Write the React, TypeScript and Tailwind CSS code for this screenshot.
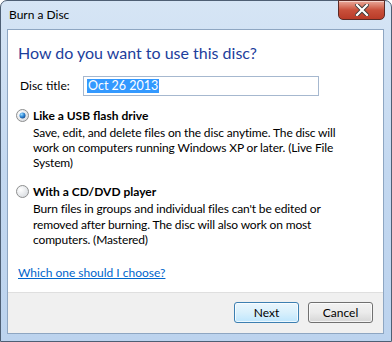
import React from "react";

const font = { fontFamily: 'Lato, "Noto Sans", sans-serif' };

function Radio({ checked }: { checked: boolean }) {
  return (
    <svg width="13" height="13" viewBox="0 0 13 13" className="shrink-0">
      <defs>
        <radialGradient id={checked ? "rg1" : "rg0"} cx="0.35" cy="0.35" r="0.8">
          <stop offset="0" stopColor="#ffffff" />
          <stop offset="1" stopColor="#d4d8dd" />
        </radialGradient>
        <radialGradient id="dot" cx="0.35" cy="0.3" r="0.8">
          <stop offset="0" stopColor="#9fdcff" />
          <stop offset="0.5" stopColor="#2f8ad8" />
          <stop offset="1" stopColor="#123f80" />
        </radialGradient>
      </defs>
      <circle cx="6.5" cy="6.5" r="6" fill={`url(#${checked ? "rg1" : "rg0"})`} stroke="#8e8f8f" strokeWidth="1" />
      {checked && <circle cx="6.5" cy="6.5" r="3" fill="url(#dot)" />}
    </svg>
  );
}

export default function App() {
  return (
    <div className="w-[392px] h-[342px] bg-white overflow-hidden" style={font}>
      <div className="relative w-[392px] h-[342px] rounded-t-[7px] border border-[#4e5f74] bg-gradient-to-b from-[#d6e5f5] via-[#c3d8f0] to-[#bcd3ee] flex flex-col">
        {/* title bar */}
        <div className="h-[28px] flex items-center pl-[8px] pb-[1px] text-[12px] text-black shrink-0">
          Burn a Disc
        </div>
        <div className="absolute top-[-1px] right-[6px] w-[47px] h-[20px] rounded-b-[5px] border border-[#5b2a25] bg-gradient-to-b from-[#e9a99a] via-[#c9503b] to-[#b93b28] flex items-center justify-center shadow-[inset_0_1px_0_rgba(255,255,255,0.5)]">
          <svg width="14" height="12" viewBox="0 0 14 12">
            <path d="M2 1 L12 11 M12 1 L2 11" stroke="#3a3a3a" strokeWidth="4" strokeLinecap="square" />
            <path d="M2 1 L12 11 M12 1 L2 11" stroke="#ffffff" strokeWidth="2.2" strokeLinecap="square" />
          </svg>
        </div>

        {/* client area */}
        <div className="ml-[6px] mr-[7px] h-[305px] border border-[#8ea6c2] bg-white flex flex-col">
          <div className="flex-1 flex flex-col pl-[10px] pr-[10px]">
            <div className="mt-[13px] text-[16px] leading-[20px] text-[#1c3e9c]">
              How do you want to use this disc?
            </div>
            <div className="mt-[13px] flex items-center">
              <span className="text-[12px] text-black w-[65px] pl-[2px]">Disc title:</span>
              <div className="w-[236px] h-[20px] border border-[#a6b8cf] flex items-center pl-[3px]">
                <span className="bg-[#3399ff] text-white text-[12.5px] leading-[14px] px-[1px]">Oct 26 2013</span>
              </div>
            </div>

            <div className="mt-[12px] ml-[-2px] flex items-center gap-[4px]">
              <Radio checked />
              <span className="text-[12px] font-bold text-black leading-[15px]">Like a USB flash drive</span>
            </div>
            <div className="pl-[15px] mt-[2px] text-[12px] leading-[15px] text-black tracking-[-0.15px] whitespace-nowrap">
              Save, edit, and delete files on the disc anytime. The disc will
              <br />
              work on computers running Windows XP or later. (Live File
              <br />
              System)
            </div>

            <div className="mt-[14px] ml-[-2px] flex items-center gap-[4px]">
              <Radio checked={false} />
              <span className="text-[12px] font-bold text-black leading-[15px]">With a CD/DVD player</span>
            </div>
            <div className="pl-[15px] mt-[2px] text-[12px] leading-[15.5px] text-black tracking-[-0.15px] whitespace-nowrap">
              Burn files in groups and individual files can't be edited or
              <br />
              removed after burning. The disc will also work on most
              <br />
              computers. (Mastered)
            </div>

            <div className="mt-[15px] leading-[15px]">
              <span className="text-[12px] text-[#0066cc] underline">Which one should I choose?</span>
            </div>
          </div>

          {/* footer */}
          <div className="h-[41px] bg-[#f0f0f0] border-t border-[#dfdfdf] flex items-center justify-end gap-[9px] pr-[10px] pb-[1px]">
            <button className="w-[65px] h-[21px] rounded-[3px] border border-[#3c7fb1] bg-gradient-to-b from-[#eaf6fd] via-[#d9f0fc] to-[#bee6fd] text-[12px] text-black shadow-[inset_0_0_0_1px_rgba(255,255,255,0.7)]">
              Next
            </button>
            <button className="w-[65px] h-[21px] rounded-[3px] border border-[#707070] bg-gradient-to-b from-[#f2f2f2] via-[#ebebeb] to-[#d6d6d6] text-[12px] text-black shadow-[inset_0_0_0_1px_rgba(255,255,255,0.7)]">
              Cancel
            </button>
          </div>
        </div>
      </div>
    </div>
  );
}
